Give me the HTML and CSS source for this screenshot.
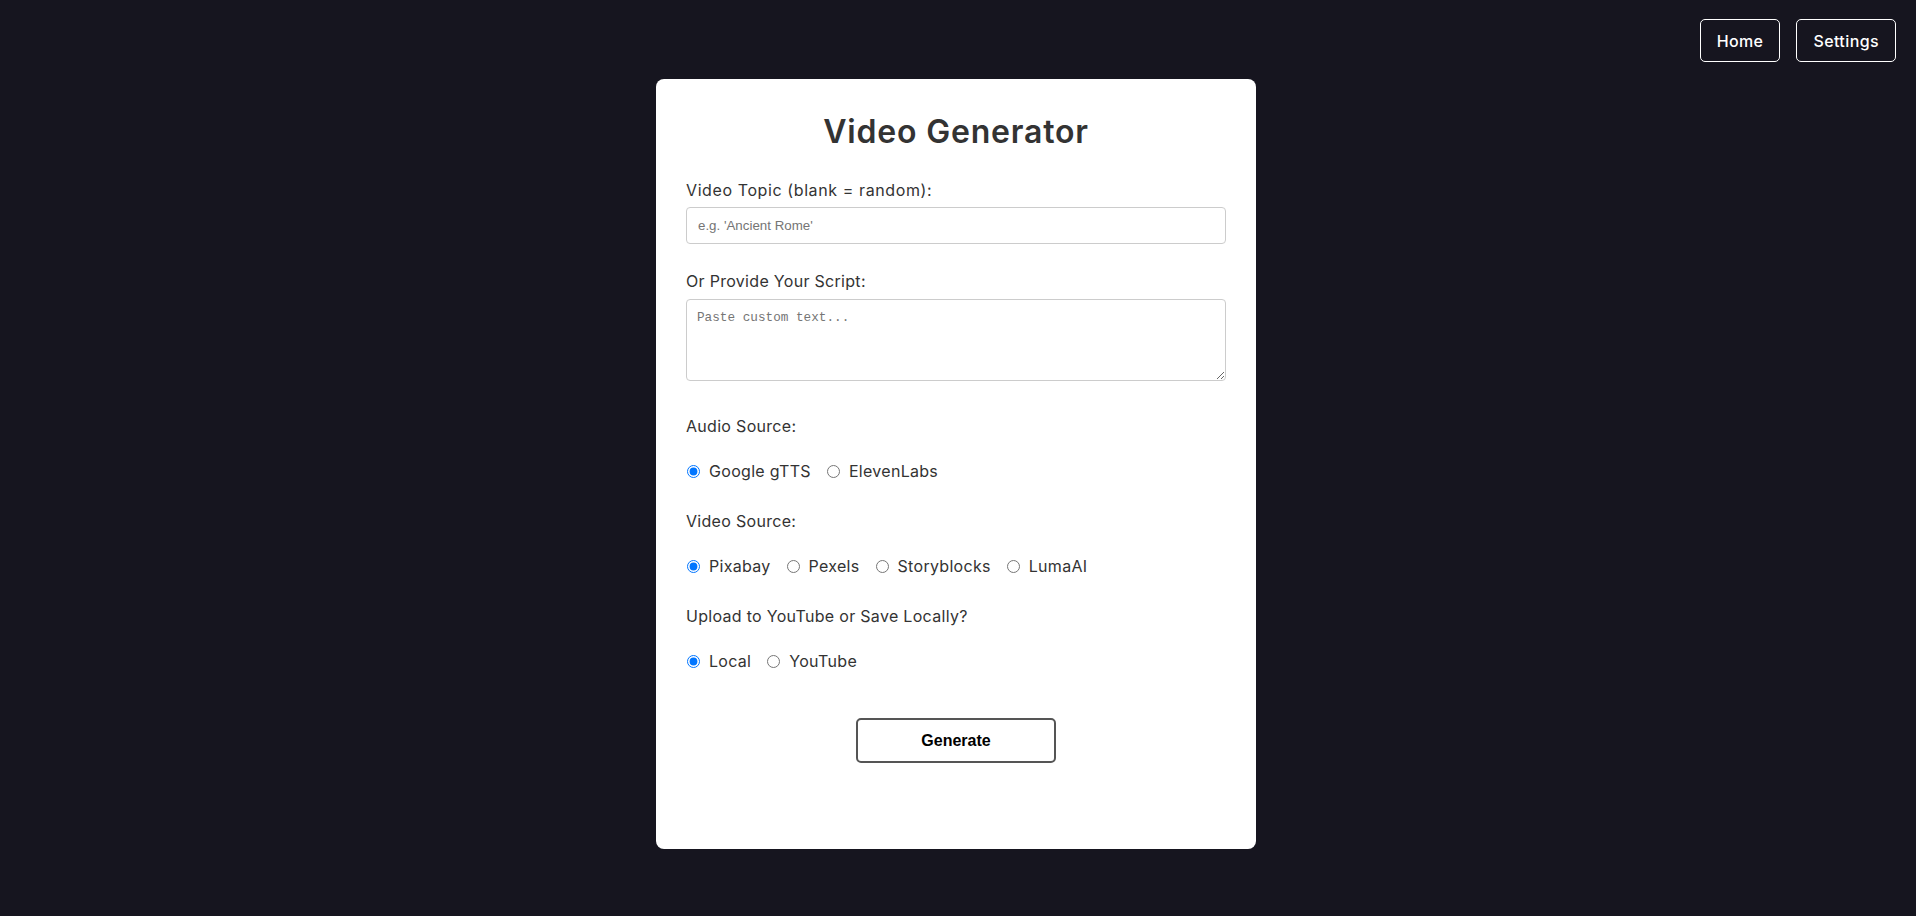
FILE: index.html
```html
<!DOCTYPE html>
<html lang="en">
<head>
<meta charset="utf-8">
<title>Video Generator</title>
<link rel="stylesheet" href="styles.css">
</head>
<body>
<header class="topbar">
  <button class="nav-btn" type="button">Home</button>
  <button class="nav-btn" type="button">Settings</button>
</header>
<main class="page">
  <form class="card">
    <h1 class="title">Video Generator</h1>

    <label class="field-label topic-label" for="topic">Video Topic (blank = random):</label>
    <input class="text-input" id="topic" type="text" placeholder="e.g. 'Ancient Rome'">

    <label class="field-label gap-top" for="script">Or Provide Your Script:</label>
    <textarea class="text-area" id="script" placeholder="Paste custom text..."></textarea>

    <div class="group first-group">
      <div class="field-label">Audio Source:</div>
      <div class="radio-row">
        <label class="option"><input type="radio" name="audio" checked><span>Google gTTS</span></label>
        <label class="option"><input type="radio" name="audio"><span>ElevenLabs</span></label>
      </div>
    </div>

    <div class="group">
      <div class="field-label">Video Source:</div>
      <div class="radio-row">
        <label class="option"><input type="radio" name="video" checked><span>Pixabay</span></label>
        <label class="option"><input type="radio" name="video"><span>Pexels</span></label>
        <label class="option"><input type="radio" name="video"><span>Storyblocks</span></label>
        <label class="option"><input type="radio" name="video"><span>LumaAI</span></label>
      </div>
    </div>

    <div class="group">
      <div class="field-label">Upload to YouTube or Save Locally?</div>
      <div class="radio-row">
        <label class="option"><input type="radio" name="dest" checked><span>Local</span></label>
        <label class="option"><input type="radio" name="dest"><span>YouTube</span></label>
      </div>
    </div>

    <button class="generate" type="button">Generate</button>
  </form>
</main>
</body>
</html>
```
FILE: styles.css
```css
* { box-sizing: border-box; }

html, body {
  margin: 0;
  padding: 0;
  background: #16151f;
  font-family: Inter, "Open Sans", sans-serif;
}

.topbar {
  display: flex;
  justify-content: flex-end;
  gap: 16px;
  padding: 19px 20px 0 0;
}

.nav-btn {
  height: 43px;
  padding: 0 16px;
  background: transparent;
  color: #ffffff;
  border: 1px solid #ffffff;
  border-radius: 5px;
  font-family: Inter, sans-serif;
  font-weight: 500;
  font-size: 16px;
  letter-spacing: 0.4px;
  cursor: pointer;
}

.page {
  display: flex;
  justify-content: center;
  padding: 17px 4px 0 0;
}

.card {
  width: 600px;
  background: #ffffff;
  border-radius: 8px;
  padding: 30px;
  display: flex;
  flex-direction: column;
}

.title {
  margin: 3px 0 26px;
  font-size: 32px;
  line-height: 40px;
  font-weight: 600;
  letter-spacing: 0.8px;
  color: #333333;
  text-align: center;
}

.field-label {
  display: block;
  font-size: 16px;
  line-height: 24px;
  letter-spacing: 0.3px;
  color: #333333;
  margin-bottom: 5px;
}

.topic-label {
  letter-spacing: 0.6px;
}

.gap-top { margin-top: 25px; margin-bottom: 6px; }

.text-input {
  width: 100%;
  height: 37px;
  padding: 0 11px;
  border: 1px solid #cccccc;
  border-radius: 4px;
  font-family: "Liberation Sans", Arial, sans-serif;
  font-size: 13.33px;
  color: #333;
}

.text-input::placeholder { color: #757575; }

.text-area {
  width: 100%;
  height: 82px;
  padding: 10px;
  border: 1px solid #cccccc;
  border-radius: 4px;
  font-family: "Liberation Mono", monospace;
  font-size: 12.7px;
  line-height: 16px;
  resize: vertical;
}

.text-area::placeholder { color: #757575; }

.group { margin-top: 26px; }
.first-group { margin-top: 33px; }

.group .field-label { margin-bottom: 21px; }

.radio-row {
  display: flex;
  align-items: center;
  height: 24px;
}

.option {
  display: inline-flex;
  align-items: center;
  margin-right: 15px;
  font-size: 16px;
  line-height: 24px;
  letter-spacing: 0.3px;
  color: #333333;
}

.option input {
  width: 13px;
  height: 13px;
  margin: 0 9px 0 1px;
}

.generate {
  display: block;
  align-self: center;
  width: 200px;
  height: 45px;
  margin: 45px 0 56px;
  background: #ffffff;
  color: #000000;
  border: 2px solid #555555;
  border-radius: 5px;
  font-family: "Liberation Sans", Arial, sans-serif;
  font-weight: 700;
  font-size: 16px;
  cursor: pointer;
}
```
